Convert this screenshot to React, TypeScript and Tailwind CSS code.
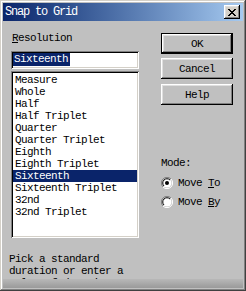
import React from 'react';

const items = [
  'Measure',
  'Whole',
  'Half',
  'Half Triplet',
  'Quarter',
  'Quarter Triplet',
  'Eighth',
  'Eighth Triplet',
  'Sixteenth',
  'Sixteenth Triplet',
  '32nd',
  '32nd Triplet',
];

const raised =
  'shadow-[inset_-1px_-1px_#000000,inset_1px_1px_#ffffff,inset_-2px_-2px_#808080,inset_2px_2px_#dfdfdf]';
const sunken =
  'shadow-[inset_1px_1px_#808080,inset_-1px_-1px_#ffffff,inset_2px_2px_#000000,inset_-2px_-2px_#d4d0c8]';

function Button({ label, primary }: { label: string; primary?: boolean }) {
  return (
    <button
      className={`w-[72px] h-[21px] bg-[#c0c0c0] flex items-center justify-center text-black ${
        primary ? 'border border-black' : ''
      }`}
    >
      <span className={`w-full h-full flex items-center justify-center ${raised}`}>{label}</span>
    </button>
  );
}

function Radio({ checked }: { checked?: boolean }) {
  return (
    <svg width="12" height="12" viewBox="0 0 12 12" className="shrink-0">
      <path d="M10 2 A5.5 5.5 0 0 0 2 10" stroke="#808080" strokeWidth="1" fill="none" />
      <path d="M2 10 A5.5 5.5 0 0 0 10 2" stroke="#ffffff" strokeWidth="1" fill="none" />
      <circle cx="6" cy="6" r="4.5" fill="#ffffff" />
      <path d="M9 3 A4.2 4.2 0 0 0 3 9" stroke="#000000" strokeWidth="1" fill="none" />
      {checked && <circle cx="6" cy="6" r="2" fill="#000000" />}
    </svg>
  );
}

export default function App() {
  return (
    <div
      className="w-[246px] h-[291px] bg-[#c0c0c0] flex flex-col p-[3px] text-[11px] leading-[12px] tracking-[-0.6px] text-black shadow-[inset_-1px_-1px_#404040,inset_1px_1px_#d4d0c8,inset_-2px_-2px_#808080,inset_2px_2px_#ffffff]"
      style={{ fontFamily: '"Liberation Mono", "DejaVu Sans Mono", monospace' }}
    >
      {/* title bar */}
      <div className="h-[18px] shrink-0 flex items-center justify-between pl-[2px] pr-[3px] bg-gradient-to-r from-[#0a246a] to-[#a6caf0]">
        <span className="text-white text-[12px] tracking-[-1.2px]">Snap to Grid</span>
        <span className={`w-[16px] h-[14px] bg-[#d4d0c8] flex items-center justify-center ${raised}`}>
          <svg width="8" height="7" viewBox="0 0 8 7">
            <path d="M0 0h2v1h1v1h2V1h1V0h2v1H7v1H6v1H5v1h1v1h1v1h1v1H6V6H5V5H3v1H2v1H0V6h1V5h1V4h1V3H2V2H1V1H0z" fill="#000" />
          </svg>
        </span>
      </div>

      {/* body */}
      <div className="flex shrink-0">
        <div className="ml-[8px] w-[128px] flex flex-col">
          <div className="mt-[11px] pl-[1px]">
            <u>R</u>esolution
          </div>
          <div className={`mt-[7px] h-[18px] bg-white p-[2px] ${sunken}`}>
            <span className="inline-block h-[13px] leading-[13px] bg-[#0a246a] text-white pl-[1px] pr-[2px]">
              Sixteenth
            </span>
          </div>
          <div className={`mt-[2px] h-[167px] bg-white pt-[3px] px-[2px] ${sunken}`}>
            {items.map((it) => (
              <div
                key={it}
                className={`h-[12px] pl-[2px] ${it === 'Sixteenth' ? 'bg-[#0a246a] text-white' : ''}`}
              >
                {it}
              </div>
            ))}
          </div>
        </div>

        <div className="ml-[22px] flex flex-col">
          <div className="mt-[12px] flex flex-col gap-[4px]">
            <Button label="OK" primary />
            <Button label="Cancel" />
            <div className="mt-[1px]">
              <Button label="Help" />
            </div>
          </div>
          <div className="mt-[52px]">Mode:</div>
          <div className="mt-[8px] flex flex-col gap-[7px]">
            <div className="flex items-center gap-[5px]">
              <Radio checked />
              <span>
                Move <u>T</u>o
              </span>
            </div>
            <div className="flex items-center gap-[5px]">
              <Radio />
              <span>
                Move <u>B</u>y
              </span>
            </div>
          </div>
        </div>
      </div>

      {/* help text */}
      <div className="mt-[15px] ml-[6px] h-[26px] overflow-hidden">
        <div>Pick a standard</div>
        <div>duration or enter a</div>
        <div>value of duration</div>
      </div>

      {/* status strip */}
      <div className="h-[9px] shrink-0 bg-gradient-to-b from-[#b8b8b8] to-[#9a9a9a]" />
    </div>
  );
}
